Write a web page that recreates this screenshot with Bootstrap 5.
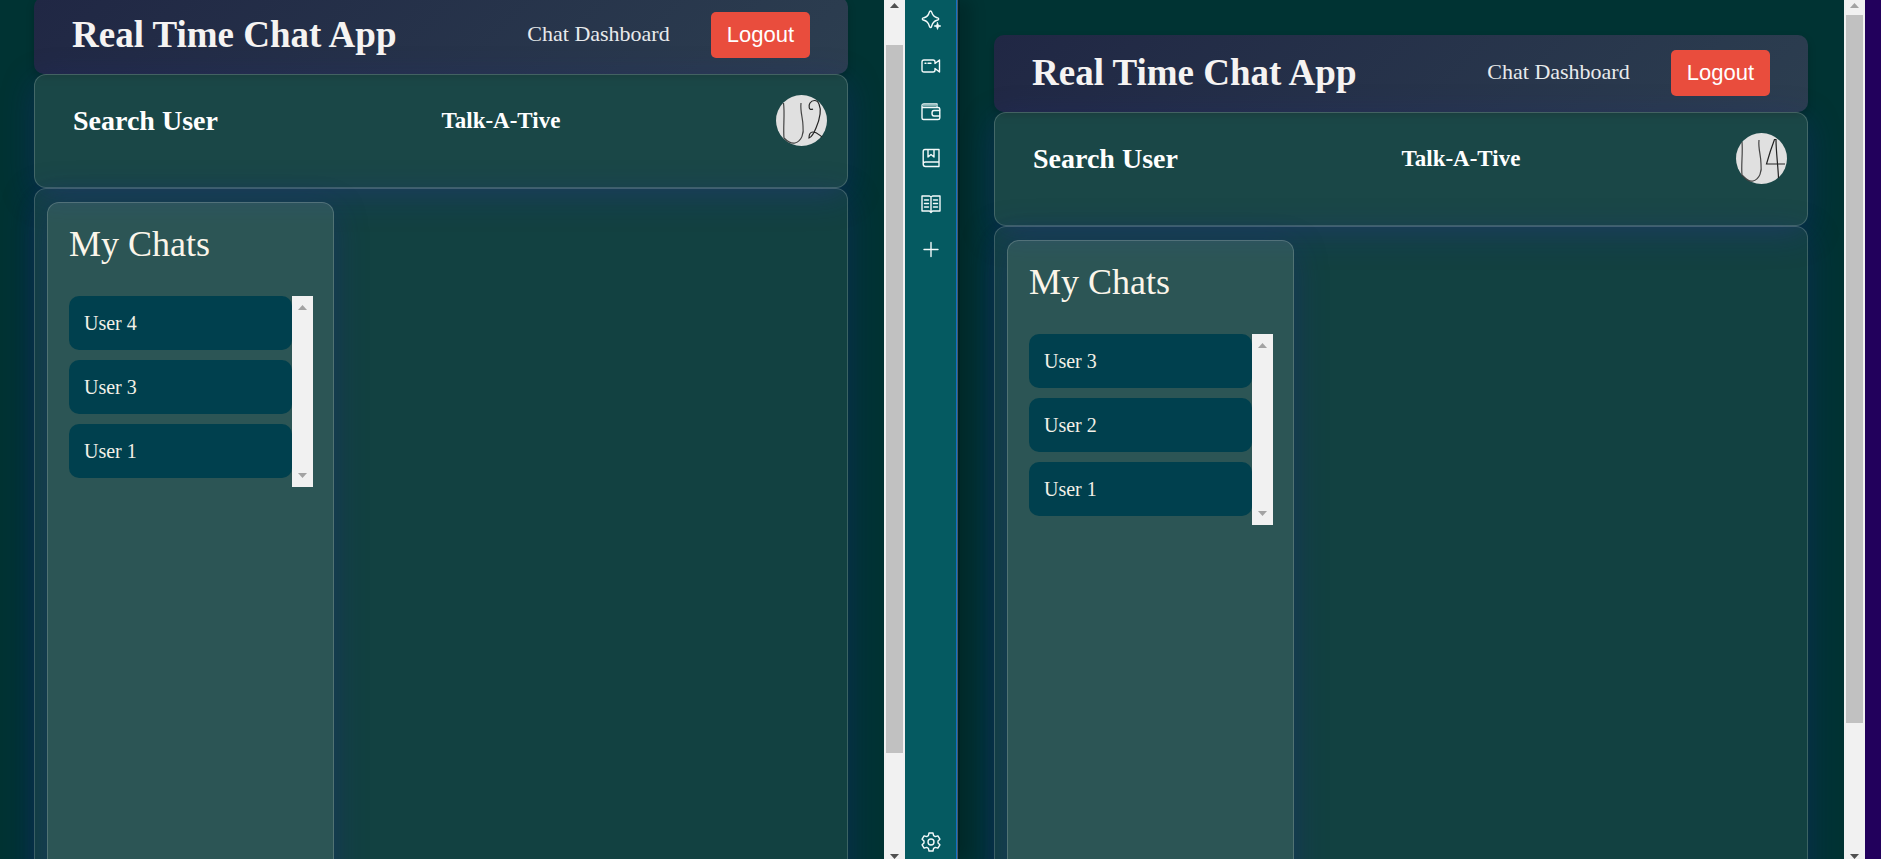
<!DOCTYPE html>
<html lang="en">
<head>
<meta charset="utf-8">
<meta name="viewport" content="width=device-width, initial-scale=1">
<title>Real Time Chat App</title>
<link rel="stylesheet" href="https://cdn.jsdelivr.net/npm/bootstrap@5.3.0/dist/css/bootstrap.min.css">
<style>
  body { background: #002a2a; font-family: "Liberation Serif", "Times New Roman", serif; line-height: 1.2; }
  .pane { min-width: 0; background: #003333; padding: 35px 36px 35px 34px; }
  .app-header { min-height: 77px; padding: 0 38px; border-radius: 10px; background: linear-gradient(135deg, #202744, #2c3e50); box-shadow: 0 4px 8px rgba(0,0,0,.2); }
  .app-title { font-size: 37px; font-weight: 700; color: #f5f3f2; }
  .app-nav { gap: 41px; padding-bottom: 2px; }
  .app-link { font-size: 22px; color: #e8eaec; }
  .logout { font-family: "Liberation Sans", Arial, sans-serif; font-size: 22px; line-height: 26px; padding: 10px 16px; border: 0; border-radius: 5px; background: #e94d3d; color: #fff; }
  .glass { border: 1px solid rgba(255,255,255,.18); border-radius: 12px; box-shadow: 0 8px 32px rgba(31,38,135,.37); }
  .search-bar { min-height: 114px; padding: 20px 20px 0 30px; background: rgba(255,255,255,.1); }
  .search-row { min-height: 51px; }
  .search-btn { font-size: 28px; line-height: 34px; font-weight: 700; color: #fff; background: none; border: 0; padding: 0 8px; }
  .brand-name { font-size: 23px; font-weight: 700; color: #fff; }
  .avatar-btn { border: 0; padding: 0; background: none; }
  .avatar-btn svg { display: block; width: 51px; height: 51px; }
  .chat-area { min-height: calc(100vh - 100px); padding: 13px 12px; background: rgba(255,255,255,.07); }
  .chat-list-card { width: 36.4%; padding: 20px 20px 20px 21px; background: rgba(255,255,255,.11); }
  .chat-heading { font-size: 36px; color: #fbf5ea; margin-bottom: 30px; font-weight: 400; }
  .chat-items { gap: 10px; padding-bottom: 9px; }
  .chat-item { font-size: 20px; line-height: 24px; padding: 15px; border: 0; border-radius: 10px; background: #00404e; color: #f3f1e8; text-align: left; }
  .bar { width: 21px; background: #f1f1f1; padding: 3px 2px 0; }
  .bar svg { display: block; width: 9px; height: 5px; fill: #505050; margin: 0 auto; flex: none; }
  .bar svg.dim { fill: #a3a3a3; }
  .bar-thumb { width: 17px; height: 82.4vh; background: #c1c1c1; margin-top: 7px; }
  .bar-low { margin-top: 37px; }
  .bar-inner { padding: 9px 2px; }
  .side { width: 52px; margin-right: 3px; padding: 10px 0 7px; background: #055a61; border-right: 1px solid #1470c4; box-shadow: 1px 0 0 #4a5a66, 14px 0 14px rgba(0,0,0,.18); z-index: 1; }
  .side-btn { width: 20px; height: 20px; padding: 0; border: 0; background: none; }
  .side-btn svg { display: block; width: 20px; height: 20px; fill: none; stroke: #f4fafa; stroke-width: 1.4; stroke-linejoin: round; stroke-linecap: round; }
  .side-stack { gap: 26px; }
  .strip { width: 16px; background: #22005c; }
</style>
</head>
<body>
<div class="d-flex vh-100 overflow-hidden">

  <main class="pane flex-fill w-50 overflow-hidden" id="first-pane">
    <header class="app-header d-flex align-items-center justify-content-between">
      <h1 class="app-title m-0">Real Time Chat App</h1>
      <nav class="app-nav d-flex align-items-center">
        <a class="app-link text-decoration-none" href="#">Chat Dashboard</a>
        <button type="button" class="logout">Logout</button>
      </nav>
    </header>
    <section class="glass search-bar">
      <div class="search-row d-flex align-items-center justify-content-between">
        <button type="button" class="search-btn">Search User</button>
        <h2 class="brand-name m-0">Talk-A-Tive</h2>
        <button type="button" class="avatar-btn" aria-label="Profile">
          <svg viewBox="0 0 51 51"><circle cx="25.5" cy="25.5" r="25.5" fill="#e0e0e0"/><g fill="none" stroke="#222" stroke-width="1.2"><path d="M7.500 8C9 19 7 32 8 43C12 47 15 49 19 48C26 46 28 38 27 31C27 23 24 17 25 8" stroke="#444"/><path d="M37 14C33 16 32 11 34 8C36 5 41 4 43 9C46 16 43 26 40 33C38 38 36 42 33 43C33 39 34 37 37 37C41 37 43 40 46 42"/></g></svg>
        </button>
      </div>
    </section>
    <section class="glass chat-area d-flex">
      <div class="glass chat-list-card">
        <h2 class="chat-heading">My Chats</h2>
        <div class="d-flex">
          <div class="chat-items d-flex flex-column flex-fill">
            <button type="button" class="chat-item">User 4</button>
            <button type="button" class="chat-item">User 3</button>
            <button type="button" class="chat-item">User 1</button>
          </div>
          <div class="bar bar-inner d-flex flex-column justify-content-between">
            <svg class="dim" viewBox="0 0 9 5"><path d="M0 5L4.500 0L9 5Z"/></svg>
            <svg class="dim" viewBox="0 0 9 5"><path d="M0 0L4.500 5L9 0Z"/></svg>
          </div>
        </div>
      </div>
    </section>
  </main>

  <div class="bar flex-shrink-0 d-flex flex-column">
    <svg viewBox="0 0 9 5"><path d="M0 5L4.500 0L9 5Z"/></svg>
    <div class="bar-thumb bar-low"></div>
    <svg class="mt-auto" viewBox="0 0 9 5"><path d="M0 0L4.500 5L9 0Z"/></svg>
  </div>

  <aside class="side flex-shrink-0 d-flex flex-column align-items-center justify-content-between">
    <div class="side-stack d-flex flex-column">
      <button type="button" class="side-btn" aria-label="Assistant"><svg viewBox="0 0 20 20"><path d="M9.500 1C10 1 10.500 1.400 10.700 2.200C11.600 5.600 12.600 6.800 16 7.700C18.300 8.400 18.300 9.700 16 10.300C12.600 11.200 11.600 12.600 10.700 16C10.100 18.200 8.900 18.200 8.300 16C7.400 12.600 6.400 11.200 3 10.300C.700 9.700 .700 8.400 3 7.700C6.400 6.800 7.400 5.600 8.300 2.200C8.500 1.400 9 1 9.500 1Z"/><path d="M16.500 12.500L17.400 15.100L20 16L17.400 16.900L16.500 19.500L15.600 16.900L13 16L15.600 15.100Z" fill="#f4fafa" stroke-width=".6"/></svg></button>
      <button type="button" class="side-btn" aria-label="Video"><svg viewBox="0 0 20 20"><path d="M3 4H12Q14 4 14 6V7.500L18.500 4V16L14 12.500V14Q14 16 12 16H3Q1 16 1 14V6Q1 4 3 4Z"/><path d="M4 7.300H5M7 7.300H10"/></svg></button>
      <button type="button" class="side-btn" aria-label="Wallet"><svg viewBox="0 0 20 20"><path d="M1 4V16Q1 17.500 2.500 17.500H17Q18.800 17.500 18.800 16V7Q18.800 5.500 17 5.500H2.500Q1 5.500 1 4Q1 2 3 2H16V5"/><path d="M2 3.500H16" stroke="#86b4b6" stroke-width="2"/><path d="M18.500 8.500H13Q11 8.500 11 11.200Q11 14 13 14H18.500"/></svg></button>
      <button type="button" class="side-btn" aria-label="Bookmarks"><svg viewBox="0 0 20 20"><path d="M18 14V1.500H4Q2.200 1.500 2.200 3.500V16Q2.200 18.500 4.500 18.500H18M2.200 16Q2.200 14 4.500 14H18V18"/><path d="M7 2V9L10 6.500L13 9V2"/></svg></button>
      <button type="button" class="side-btn" aria-label="Reading list"><svg viewBox="0 0 20 20"><path d="M1 2H8.500L10 3L11.500 2H19V17H11.500L10 18.500L8.500 17H1ZM10 3V18"/><path d="M3.500 6H7.500M3.500 9.500H7.500M3.500 13H7.500M12.500 6H16.500M12.500 9.500H16.500M12.500 13H16.500"/></svg></button>
      <button type="button" class="side-btn" aria-label="Add"><svg viewBox="0 0 20 20"><path d="M10 2.500V16.500M3 9.500H17"/></svg></button>
    </div>
    <button type="button" class="side-btn" aria-label="Settings"><svg viewBox="0 0 20 20"><path d="M8 1H12L12.600 3.600L14.300 4.600L16.900 3.800L18.900 7.200L17 9V11L18.900 12.800L16.900 16.200L14.300 15.400L12.600 16.400L12 19H8L7.400 16.400L5.700 15.400L3.100 16.200L1.100 12.800L3 11V9L1.100 7.200L3.100 3.800L5.700 4.600L7.400 3.600Z"/><circle cx="10" cy="10" r="3"/></svg></button>
  </aside>

  <main class="pane flex-fill w-50 overflow-hidden">
    <header class="app-header d-flex align-items-center justify-content-between">
      <h1 class="app-title m-0">Real Time Chat App</h1>
      <nav class="app-nav d-flex align-items-center">
        <a class="app-link text-decoration-none" href="#">Chat Dashboard</a>
        <button type="button" class="logout">Logout</button>
      </nav>
    </header>
    <section class="glass search-bar">
      <div class="search-row d-flex align-items-center justify-content-between">
        <button type="button" class="search-btn">Search User</button>
        <h2 class="brand-name m-0">Talk-A-Tive</h2>
        <button type="button" class="avatar-btn" aria-label="Profile">
          <svg viewBox="0 0 51 51"><circle cx="25.5" cy="25.5" r="25.5" fill="#e0e0e0"/><g fill="none" stroke="#222" stroke-width="1.2"><path d="M6 9C7 20 5 32 6 42C10 46 13 49 17 48C24 46 26 38 25 31C25 22 22 16 23 7" stroke="#444"/><path d="M49 31L30.500 31C33 22 36 13 38.500 6.500L40 6.500C40 19 42 32 42.500 45"/></g></svg>
        </button>
      </div>
    </section>
    <section class="glass chat-area d-flex">
      <div class="glass chat-list-card">
        <h2 class="chat-heading">My Chats</h2>
        <div class="d-flex">
          <div class="chat-items d-flex flex-column flex-fill">
            <button type="button" class="chat-item">User 3</button>
            <button type="button" class="chat-item">User 2</button>
            <button type="button" class="chat-item">User 1</button>
          </div>
          <div class="bar bar-inner d-flex flex-column justify-content-between">
            <svg class="dim" viewBox="0 0 9 5"><path d="M0 5L4.500 0L9 5Z"/></svg>
            <svg class="dim" viewBox="0 0 9 5"><path d="M0 0L4.500 5L9 0Z"/></svg>
          </div>
        </div>
      </div>
    </section>
  </main>

  <div class="bar flex-shrink-0 d-flex flex-column">
    <svg class="dim" viewBox="0 0 9 5"><path d="M0 5L4.500 0L9 5Z"/></svg>
    <div class="bar-thumb"></div>
    <svg class="mt-auto" viewBox="0 0 9 5"><path d="M0 0L4.500 5L9 0Z"/></svg>
  </div>
  <div class="strip flex-shrink-0"></div>
</div>
<script src="https://cdn.jsdelivr.net/npm/bootstrap@5.3.0/dist/js/bootstrap.bundle.min.js"></script>
<script>
  // The first window is already scrolled down a little.
  document.getElementById('first-pane').scrollTop = 38;
</script>
</body>
</html>
